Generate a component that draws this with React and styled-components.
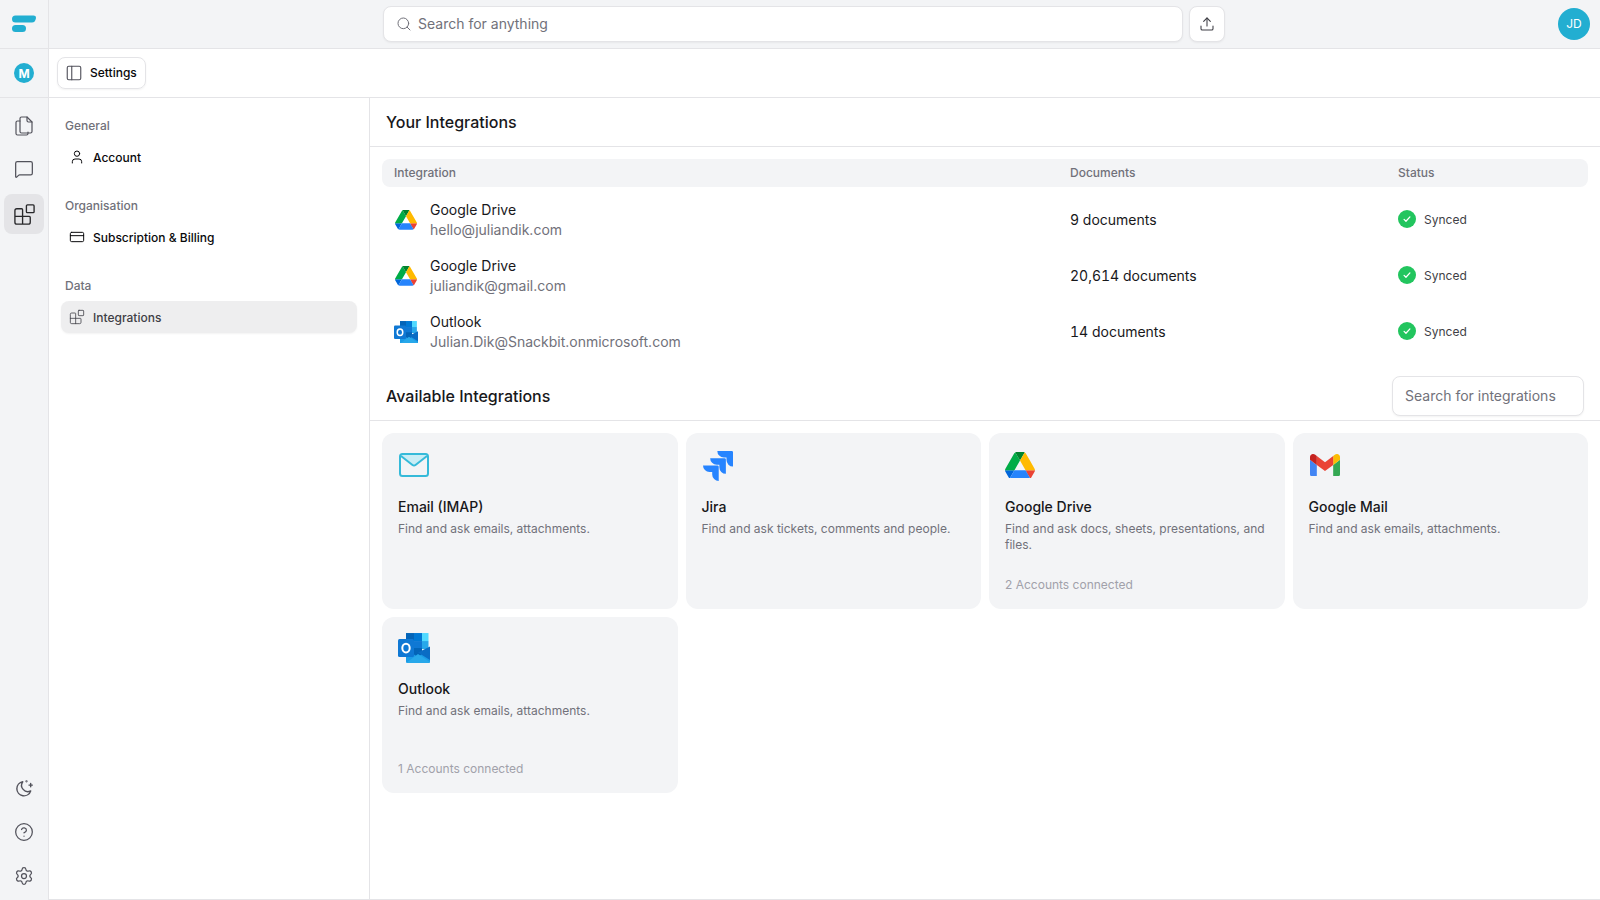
import React from 'react';
import styled, { createGlobalStyle } from 'styled-components';
import {
  Blocks,
  CircleHelp,
  CreditCard,
  MessageSquare,
  PanelLeft,
  Search,
  Settings,
  Upload,
  User,
} from 'lucide-react';

const GlobalStyle = createGlobalStyle`
  html, body { margin: 0; padding: 0; height: 100%; background: #fff; }
  body { font-family: Inter, "Liberation Sans", sans-serif; color: #18181b; }
  #root { height: 100%; }
  * { box-sizing: border-box; }
`;

const Page = styled.div`
  display: flex;
  width: 1600px;
  height: 900px;
  overflow: hidden;
`;

const Rail = styled.aside`
  width: 49px;
  flex: none;
  display: flex;
  flex-direction: column;
  background: #f3f4f6;
  border-right: 1px solid #e4e4e7;
`;

const RailCell = styled.div`
  height: 49px;
  flex: none;
  display: flex;
  align-items: center;
  justify-content: center;
  border-bottom: 1px solid #e4e4e7;
`;

const MBadge = styled.div`
  width: 20px;
  height: 20px;
  border-radius: 50%;
  background: #22aed1;
  color: #fff;
  font-size: 12px;
  font-weight: 700;
  display: flex;
  align-items: center;
  justify-content: center;
`;

const RailNav = styled.nav`
  flex: 1;
  display: flex;
  flex-direction: column;
  align-items: center;
  gap: 4px;
  padding: 8px 0 4px;
`;

const RailButton = styled.div`
  width: 40px;
  height: 40px;
  padding-bottom: ${(p) => p.$lift || 0}px;
  border-radius: 8px;
  display: flex;
  align-items: center;
  justify-content: center;
  color: #52525b;
  background: ${(p) => (p.$active ? '#e4e4e7' : 'transparent')};
  ${(p) => p.$active && 'color: #27272a;'}
`;

const RailSpacer = styled.div`
  flex: 1;
`;

const Main = styled.div`
  flex: 1;
  min-width: 0;
  display: flex;
  flex-direction: column;
`;

const TopBar = styled.header`
  height: 49px;
  flex: none;
  background: #f3f4f6;
  border-bottom: 1px solid #e4e4e7;
  display: flex;
  align-items: center;
  padding: 0 10px 1px 334px;
`;

const SearchBox = styled.div`
  width: 800px;
  height: 36px;
  background: #fff;
  border: 1px solid #e4e4e7;
  border-radius: 8px;
  box-shadow: 0 1px 2px rgba(0, 0, 0, 0.05);
  display: flex;
  align-items: center;
  gap: 6px;
  padding: 0 12px;
  font-size: 14px;
  color: #71717a;
`;

const UploadButton = styled.div`
  width: 36px;
  height: 36px;
  margin-left: 6px;
  background: #fff;
  border: 1px solid #e4e4e7;
  border-radius: 8px;
  box-shadow: 0 1px 2px rgba(0, 0, 0, 0.05);
  display: flex;
  align-items: center;
  justify-content: center;
  color: #3f3f46;
`;

const Avatar = styled.div`
  width: 32px;
  height: 32px;
  margin-left: auto;
  border-radius: 50%;
  background: #22aed1;
  color: #fff;
  font-size: 12px;
  display: flex;
  align-items: center;
  justify-content: center;
`;

const SubBar = styled.div`
  height: 49px;
  flex: none;
  border-bottom: 1px solid #e4e4e7;
  display: flex;
  align-items: center;
  padding-left: 8px;
`;

const SettingsButton = styled.div`
  height: 32px;
  padding: 0 8px 0 7px;
  display: flex;
  align-items: center;
  gap: 7px;
  border: 1px solid #e4e4e7;
  border-radius: 8px;
  box-shadow: 0 1px 2px rgba(0, 0, 0, 0.05);
  font-size: 12px;
  font-weight: 500;
  color: #09090b;
  svg { color: #52525b; }
`;

const ButtonLabel = styled.span`
  margin-bottom: 2px;
`;

const Body = styled.div`
  flex: 1;
  min-height: 0;
  display: flex;
  border-bottom: 1px solid #e4e4e7;
`;

const SideMenu = styled.aside`
  width: 321px;
  flex: none;
  border-right: 1px solid #e4e4e7;
  padding: 0 12px;
`;

const MenuGroup = styled.div`
  padding-top: 20px;
  & + & { padding-top: 25px; }
`;

const MenuLabel = styled.div`
  height: 16px;
  line-height: 16px;
  padding-left: 4px;
  font-size: 12px;
  font-weight: 500;
  color: #71717a;
  margin-bottom: 7px;
`;

const MenuItem = styled.div`
  height: 32px;
  display: flex;
  align-items: center;
  gap: 8px;
  padding: 0 8px;
  border-radius: 8px;
  font-size: 12px;
  font-weight: 500;
  color: ${(p) => (p.$active ? '#3f3f46' : '#09090b')};
  background: ${(p) => (p.$active ? '#eeeeef' : 'transparent')};
  ${(p) => p.$active && 'box-shadow: 0 1px 2px rgba(0, 0, 0, 0.05);'}
`;

const MenuIcon = styled.span`
  width: 16px;
  height: 16px;
  display: flex;
  align-items: center;
  justify-content: center;
  flex: none;
`;

const Content = styled.main`
  flex: 1;
  min-width: 0;
`;

const SectionHead = styled.div`
  height: 49px;
  border-bottom: 1px solid #e4e4e7;
  display: flex;
  align-items: center;
  justify-content: space-between;
  padding: 0 16px;
`;

const AvailableHead = styled(SectionHead)`
  height: 62px;
  padding-top: 12px;
`;

const SectionTitle = styled.h2`
  margin: 0;
  font-size: 16px;
  font-weight: 500;
  color: #18181b;
`;

const Table = styled.div`
  padding: 12px 12px 0;
`;

const gridCols = '676px 328px 1fr';

const HeadRow = styled.div`
  display: grid;
  grid-template-columns: ${gridCols};
  align-items: center;
  height: 28px;
  padding: 0 12px 1px;
  margin-bottom: 4px;
  background: #f3f4f6;
  border-radius: 8px;
  font-size: 12px;
  font-weight: 500;
  color: #71717a;
`;

const Row = styled.div`
  display: grid;
  grid-template-columns: ${gridCols};
  align-items: center;
  height: 56px;
  padding: 0 12px;
  font-size: 14px;
`;

const RowName = styled.div`
  display: flex;
  align-items: center;
  gap: 12px;
  padding-top: 2px;
`;

const RowIcon = styled.div`
  width: 24px;
  display: flex;
  justify-content: center;
`;

const RowText = styled.div`
  line-height: 20px;
  color: #18181b;
`;

const RowMail = styled.div`
  color: #71717a;
`;

const DocCount = styled.div`
  font-variant-numeric: tabular-nums;
`;

const Status = styled.div`
  display: flex;
  align-items: center;
  gap: 8px;
  font-size: 12px;
  color: #3f3f46;
`;

const Check = styled.span`
  width: 18px;
  height: 18px;
  border-radius: 50%;
  background: #22c55e;
  display: flex;
  align-items: center;
  justify-content: center;
`;

const IntegrationSearch = styled.div`
  width: 192px;
  height: 40px;
  background: #fff;
  border: 1px solid #e4e4e7;
  border-radius: 8px;
  box-shadow: 0 1px 2px rgba(0, 0, 0, 0.05);
  display: flex;
  align-items: center;
  padding: 0 12px;
  font-size: 14px;
  color: #71717a;
`;

const Cards = styled.div`
  display: grid;
  grid-template-columns: repeat(4, 1fr);
  grid-auto-rows: 176px;
  gap: 8px;
  padding: 12px 12px 0;
`;

const Card = styled.div`
  background: #f3f4f6;
  border-radius: 12px;
  padding: 16px;
  display: flex;
  flex-direction: column;
`;

const CardIcon = styled.div`
  height: ${(p) => p.$height || 32}px;
  padding-left: ${(p) => p.$inset || 0}px;
  padding-top: ${(p) => p.$drop || 0}px;
  display: flex;
  align-items: center;
  flex: none;
`;

const CardName = styled.div`
  margin-top: 16px;
  line-height: 20px;
  font-size: 14px;
  font-weight: 500;
  color: #18181b;
`;

const CardDesc = styled.div`
  margin-top: 4px;
  line-height: 16px;
  font-size: 12px;
  color: #71717a;
`;

const CardFoot = styled.div`
  margin-top: auto;
  line-height: 16px;
  font-size: 12px;
  color: #a1a1aa;
`;

function Logo() {
  return (
    <svg width="24" height="18" viewBox="0 0 24 18">
      <path d="M3.5 0.5H21.5C23.3 0.5 24.3 1.6 23.9 3.4 23.5 5.6 22.3 7.5 20 7.5H3.5A3.5 3.5 0 0 1 3.5 0.5Z" fill="#22aed1" />
      <path d="M3.5 10H10.5A3.5 3.5 0 0 1 10.5 17H3.5A3.5 3.5 0 0 1 3.5 10Z" fill="#22aed1" />
    </svg>
  );
}

function FilesIcon() {
  return (
    <svg width="24" height="24" viewBox="0 0 24 24" fill="none" stroke="currentColor" strokeWidth="1.2" strokeLinecap="round" strokeLinejoin="round">
      <path d="M8 4.5a1.5 1.5 0 0 1 1.5-1.5H15l5 5v9.5a1.5 1.5 0 0 1-1.5 1.5h-9A1.5 1.5 0 0 1 8 17.5z" />
      <path d="M15 3v3.5A1.5 1.5 0 0 0 16.5 8H20" />
      <path d="M8 7H5.5A1.5 1.5 0 0 0 4 8.5v11A1.5 1.5 0 0 0 5.5 21h9a1.5 1.5 0 0 0 1.5-1.5V18" />
    </svg>
  );
}

function MoonIcon() {
  return (
    <svg width="20" height="20" viewBox="0 0 24 24" fill="none" stroke="currentColor" strokeWidth="1.7" strokeLinecap="round" strokeLinejoin="round">
      <path d="M10.5 4.5a7.5 7.5 0 0 0 9.5 11A8.5 8.5 0 1 1 10.5 4.5Z" />
      <path d="M20 6.5v4M18 8.5h4" />
      <circle cx="15" cy="4" r="0.5" />
    </svg>
  );
}

function DriveIcon({ size }) {
  return (
    <svg width={size} height={size * 0.893} viewBox="0 0 87.3 78">
      <path d="m6.6 66.85 3.85 6.65c.8 1.4 1.95 2.5 3.3 3.3l13.75-23.8h-27.5c0 1.55.4 3.1 1.2 4.5z" fill="#0066da" />
      <path d="m43.65 25-13.75-23.8c-1.35.8-2.5 1.9-3.3 3.3l-25.4 44a9.06 9.06 0 0 0 -1.2 4.5h27.5z" fill="#00ac47" />
      <path d="m73.55 76.8c1.35-.8 2.5-1.9 3.3-3.3l1.6-2.75 7.65-13.25c.8-1.4 1.2-2.95 1.2-4.5h-27.502l5.852 11.5z" fill="#ea4335" />
      <path d="m43.65 25 13.75-23.8c-1.35-.8-2.9-1.2-4.5-1.2h-18.5c-1.6 0-3.15.45-4.5 1.2z" fill="#00832d" />
      <path d="m59.8 53h-32.3l-13.75 23.8c1.35.8 2.9 1.2 4.5 1.2h50.8c1.6 0 3.15-.45 4.5-1.2z" fill="#2684fc" />
      <path d="m73.4 26.5-12.7-22c-.8-1.4-1.95-2.5-3.3-3.3l-13.75 23.8 16.15 28h27.45c0-1.55-.4-3.1-1.2-4.5z" fill="#ffba00" />
    </svg>
  );
}

function OutlookIcon({ size }) {
  return (
    <svg width={size} height={size * 0.94} viewBox="0 0 32 30">
      <rect x="8" y="0" width="8" height="8" fill="#0364b8" />
      <rect x="16" y="0" width="8" height="8" fill="#0078d4" />
      <rect x="24" y="0" width="6.5" height="8" fill="#50d9ff" />
      <rect x="8" y="8" width="8" height="8" fill="#0364b8" />
      <rect x="16" y="8" width="8" height="8" fill="#0f78d4" />
      <rect x="24" y="8" width="6.5" height="8" fill="#28a8ea" />
      <path d="M8 15h8v8H8z" fill="#064a8c" />
      <path d="M16 15h8v8h-8z" fill="#0364b8" />
      <path d="M8 16.5 20 24l12-9.5V28.5a1.5 1.5 0 0 1-1.5 1.5h-21A1.5 1.5 0 0 1 8 28.5z" fill="#1a9be6" />
      <path d="M32 13.5V27l-12-7.5z" fill="#0a6cc4" />
      <path d="M8 30 20 21l12 8V28.5a1.5 1.5 0 0 1-1.5 1.5z" fill="#28a8ea" />
      <rect x="0" y="6" width="16" height="18" rx="1.5" fill="#0f78d4" />
      <ellipse cx="8" cy="15" rx="3.7" ry="4.4" fill="none" stroke="#fff" strokeWidth="2" />
    </svg>
  );
}

function MailIcon() {
  return (
    <svg width="30" height="24" viewBox="0 0 30 24" fill="none">
      <path d="M2 2 15 13 28 2z" fill="#c9edf5" />
      <rect x="1" y="1" width="28" height="22" rx="2.5" stroke="#35bad9" strokeWidth="2" />
      <path d="M2 3l11.5 9a2.5 2.5 0 0 0 3 0L28 3" stroke="#35bad9" strokeWidth="2" />
    </svg>
  );
}

function JiraIcon() {
  return (
    <svg width="30" height="30" viewBox="0 0 24 24">
      <path
        fill="#2684ff"
        d="M11.571 11.513H0a5.218 5.218 0 0 0 5.232 5.215h2.13v2.057A5.215 5.215 0 0 0 12.575 24V12.518a1.005 1.005 0 0 0-1.005-1.005zm5.723-5.756H5.736a5.215 5.215 0 0 0 5.215 5.214h2.129v2.058a5.218 5.218 0 0 0 5.215 5.214V6.758a1.001 1.001 0 0 0-1.001-1.001zM23.013 0H11.455a5.215 5.215 0 0 0 5.215 5.215h2.129v2.057A5.215 5.215 0 0 0 24 12.483V1.005A1.001 1.001 0 0 0 23.013 0Z"
      />
    </svg>
  );
}

function GmailIcon() {
  return (
    <svg width="30" height="22.5" viewBox="52 42 88 66">
      <path fill="#4285f4" d="M58 108h14V74L52 59v43c0 3.32 2.69 6 6 6" />
      <path fill="#34a853" d="M120 108h14c3.32 0 6-2.69 6-6V59l-20 15" />
      <path fill="#fbbc04" d="M120 48v26l20-15v-8c0-7.42-8.47-11.65-14.4-7.2" />
      <path fill="#ea4335" d="M72 74V48l24 18 24-18v26L96 92" />
      <path fill="#c5221f" d="M52 51v8l20 15V48l-5.6-4.2c-5.94-4.45-14.4-.22-14.4 7.2" />
    </svg>
  );
}

const connected = [
  { name: 'Google Drive', mail: 'hello@juliandik.com', docs: '9 documents', icon: <DriveIcon size={22} /> },
  { name: 'Google Drive', mail: 'juliandik@gmail.com', docs: '20,614 documents', icon: <DriveIcon size={22} /> },
  { name: 'Outlook', mail: 'Julian.Dik@Snackbit.onmicrosoft.com', docs: '14 documents', icon: <OutlookIcon size={24} /> },
];

const available = [
  { name: 'Email (IMAP)', desc: 'Find and ask emails, attachments.', icon: <MailIcon />, inset: 1 },
  { name: 'Jira', desc: 'Find and ask tickets, comments and people.', icon: <JiraIcon />, inset: 1, drop: 2 },
  { name: 'Google Drive', desc: 'Find and ask docs, sheets, presentations, and files.', foot: '2 Accounts connected', icon: <DriveIcon size={30} /> },
  { name: 'Google Mail', desc: 'Find and ask emails, attachments.', icon: <GmailIcon />, inset: 1 },
  { name: 'Outlook', desc: 'Find and ask emails, attachments.', foot: '1 Accounts connected', icon: <OutlookIcon size={32} />, iconHeight: 30 },
];

export default function App() {
  return (
    <Page>
      <GlobalStyle />
      <Rail>
        <RailCell>
          <Logo />
        </RailCell>
        <RailCell>
          <MBadge>M</MBadge>
        </RailCell>
        <RailNav>
          <RailButton><FilesIcon /></RailButton>
          <RailButton $lift={2}><MessageSquare size={20} strokeWidth={1.5} /></RailButton>
          <RailButton $active><Blocks size={23} strokeWidth={1.4} /></RailButton>
          <RailSpacer />
          <RailButton><MoonIcon /></RailButton>
          <RailButton><CircleHelp size={20} strokeWidth={1.5} /></RailButton>
          <RailButton><Settings size={20} strokeWidth={1.5} /></RailButton>
        </RailNav>
      </Rail>
      <Main>
        <TopBar>
          <SearchBox>
            <Search size={16} strokeWidth={1.5} />
            Search for anything
          </SearchBox>
          <UploadButton><Upload size={16} strokeWidth={1.6} /></UploadButton>
          <Avatar>JD</Avatar>
        </TopBar>
        <SubBar>
          <SettingsButton>
            <PanelLeft size={18} strokeWidth={1.5} />
            <ButtonLabel>Settings</ButtonLabel>
          </SettingsButton>
        </SubBar>
        <Body>
          <SideMenu>
            <MenuGroup>
              <MenuLabel>General</MenuLabel>
              <MenuItem><MenuIcon><User size={16} strokeWidth={1.5} /></MenuIcon>Account</MenuItem>
            </MenuGroup>
            <MenuGroup>
              <MenuLabel>Organisation</MenuLabel>
              <MenuItem><MenuIcon><CreditCard size={16} strokeWidth={1.5} /></MenuIcon>Subscription &amp; Billing</MenuItem>
            </MenuGroup>
            <MenuGroup>
              <MenuLabel>Data</MenuLabel>
              <MenuItem $active><MenuIcon><Blocks size={20} strokeWidth={1.2} /></MenuIcon>Integrations</MenuItem>
            </MenuGroup>
          </SideMenu>
          <Content>
            <SectionHead>
              <SectionTitle>Your Integrations</SectionTitle>
            </SectionHead>
            <Table>
              <HeadRow>
                <div>Integration</div>
                <div>Documents</div>
                <div>Status</div>
              </HeadRow>
              {connected.map((row) => (
                <Row key={row.mail}>
                  <RowName>
                    <RowIcon>{row.icon}</RowIcon>
                    <RowText>
                      {row.name}
                      <RowMail>{row.mail}</RowMail>
                    </RowText>
                  </RowName>
                  <DocCount>{row.docs}</DocCount>
                  <Status>
                    <Check>
                      <svg width="10" height="10" viewBox="0 0 24 24" fill="none" stroke="#fff" strokeWidth="3" strokeLinecap="round" strokeLinejoin="round">
                        <path d="M5 13l4.5 4.5L19 7" />
                      </svg>
                    </Check>
                    Synced
                  </Status>
                </Row>
              ))}
            </Table>
            <AvailableHead>
              <SectionTitle>Available Integrations</SectionTitle>
              <IntegrationSearch>Search for integrations</IntegrationSearch>
            </AvailableHead>
            <Cards>
              {available.map((card) => (
                <Card key={card.name}>
                  <CardIcon $height={card.iconHeight} $inset={card.inset} $drop={card.drop}>{card.icon}</CardIcon>
                  <CardName>{card.name}</CardName>
                  <CardDesc>{card.desc}</CardDesc>
                  {card.foot && <CardFoot>{card.foot}</CardFoot>}
                </Card>
              ))}
            </Cards>
          </Content>
        </Body>
      </Main>
    </Page>
  );
}
